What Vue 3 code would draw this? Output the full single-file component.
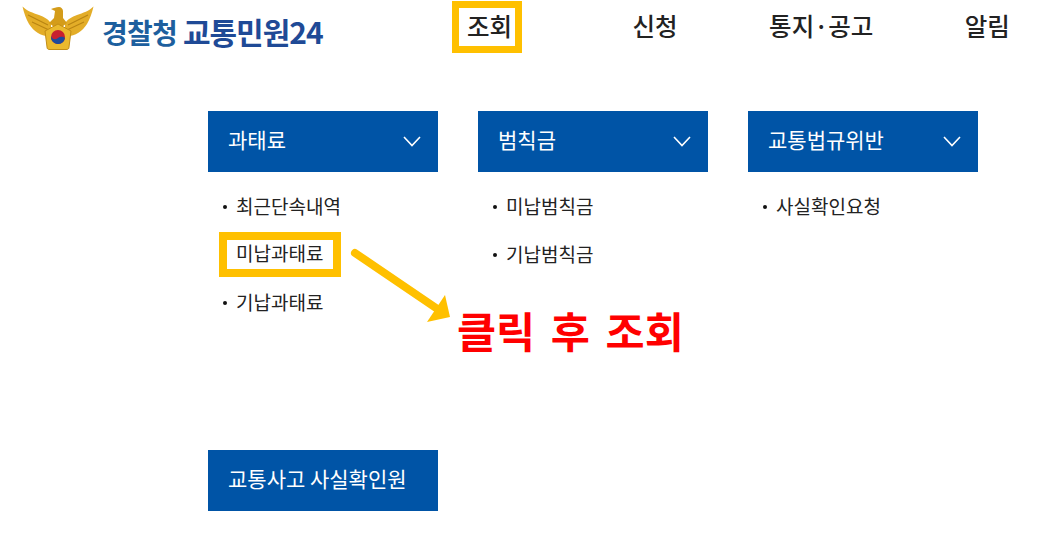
<script setup>
const menus = [
  { title: "과태료", items: ["최근단속내역", "미납과태료", "기납과태료"], active: "미납과태료" },
  { title: "범칙금", items: ["미납범칙금", "기납범칙금"] },
  { title: "교통법규위반", items: ["사실확인요청"] },
];
const navItems = ["신청", "통지·공고", "알림"];
</script>

<template>
  <div class="page">
    <header class="header">
      <div class="logo">
        <svg class="emblem" width="72" height="46" viewBox="0 0 72 46">
          <path d="M0.5 0.5 C5 5 11 7 17 9 C22 11 27 13 29 18 L29 30 C20 31 12 26 7 18 C4 13 2 7 0.5 0.5 Z" fill="#e3ad28" />
          <path d="M71.5 0.5 C67 5 61 7 55 9 C50 11 45 13 43 18 L43 30 C52 31 60 26 65 18 C68 13 70 7 71.5 0.5 Z" fill="#e3ad28" />
          <path d="M6 9 L26 19 M10 16 L27 24 M66 9 L46 19 M62 16 L45 24" stroke="#b98412" stroke-width="1.1" fill="none" />
          <path d="M37 1 C34 1 32 2 29 3 L33 5 L32 12 L27 17 L36 24 L45 17 L41 12 L41 5 C41 3 39 1 37 1 Z" fill="#d49c1a" />
          <path d="M36 18 L49 25 L47 41 C47 43 46 43.5 44 43.5 L28 43.5 C26 43.5 25 43 25 41 L23 25 Z" fill="#eab92e" stroke="#c28d15" stroke-width="1" />
          <circle cx="36" cy="31" r="7" fill="#c8202f" />
          <path d="M29 30 C30.5 34 33.5 34 36 32 C38.5 30 41.5 31 43 32 A7 7 0 0 1 29 30 Z" fill="#1d4a9c" />
        </svg>
        <span class="logo-text"><span class="logo-org">경찰청</span><span class="logo-name">교통민원24</span></span>
      </div>
      <nav class="nav">
        <a class="nav-item nav-active">조회</a>
        <a v-for="item in navItems" :key="item" class="nav-item">{{ item }}</a>
      </nav>
    </header>

    <main class="content">
      <section v-for="menu in menus" :key="menu.title" class="menu">
        <div class="menu-head">
          <span class="head-text">{{ menu.title }}</span>
          <svg width="18" height="11" viewBox="0 0 18 11">
            <path d="M1 1 L9 9.5 L17 1" fill="none" stroke="#fff" stroke-width="1.6" />
          </svg>
        </div>
        <ul class="menu-list">
          <li v-for="item in menu.items" :key="item" :class="{ picked: item === menu.active }">
            <span class="label">{{ item }}</span>
          </li>
        </ul>
      </section>

      <div class="menu-head single"><span class="head-text">교통사고 사실확인원</span></div>

      <svg class="arrow" width="110" height="90" viewBox="0 0 110 90">
        <path d="M5 7 L86 62" stroke="#ffc000" stroke-width="8" stroke-linecap="round" fill="none" />
        <path d="M100 71 L77 76 L95 49 Z" fill="#ffc000" />
      </svg>
      <div class="callout">클릭 후 조회</div>
    </main>
  </div>
</template>

<style>
html,
body {
  margin: 0;
  background: #fff;
}
</style>

<style scoped>
.page {
  width: 1062px;
  height: 559px;
  overflow: hidden;
  position: relative;
  font-family: "Noto Sans CJK KR", "Noto Sans", sans-serif;
  color: #222;
}

.header {
  display: flex;
  height: 54px;
  padding-left: 22px;
  box-sizing: border-box;
}

.logo {
  display: flex;
  align-items: flex-start;
  width: 430px;
  padding-top: 6px;
  box-sizing: border-box;
}

.emblem {
  flex: none;
}

.logo-text {
  display: flex;
  align-items: baseline;
  gap: 6px;
  margin: 7px 0 0 8px;
  line-height: 36px;
  font-weight: 700;
  white-space: nowrap;
}

.logo-org {
  color: #1d5f9e;
  font-size: 28px;
  letter-spacing: -0.8px;
}

.logo-name {
  color: #1f4a96;
  font-size: 30px;
  letter-spacing: -1px;
}

.nav {
  display: flex;
  align-items: flex-start;
  gap: 91.5px;
  padding-top: 1px;
}

.nav-item {
  font-size: 24.5px;
  line-height: 50px;
  height: 52px;
  font-weight: 500;
  white-space: nowrap;
}

.nav-active {
  box-sizing: border-box;
  width: 70px;
  border: 7px solid #ffc000;
  line-height: 36px;
  padding-left: 8px;
  margin-right: 19px;
}

.content {
  display: grid;
  grid-template-columns: repeat(3, 230px);
  grid-template-rows: 339px 61px;
  column-gap: 40px;
  padding: 57px 0 0 208px;
  position: relative;
}

.menu-head {
  display: flex;
  align-items: center;
  justify-content: space-between;
  height: 61px;
  padding: 0 17px 0 20px;
  background: #0054a6;
  color: #fff;
  font-size: 21px;
  font-weight: 400;
}

.head-text {
  margin-top: -5px;
}

.menu-list {
  list-style: none;
  margin: 0;
  padding: 10px 0 0 28px;
}

.menu-list li {
  position: relative;
  height: 48px;
  font-size: 19px;
  line-height: 47px;
  font-weight: 400;
}

.menu-list li::before {
  content: "";
  position: absolute;
  left: -13px;
  top: 23px;
  width: 4px;
  height: 4px;
  border-radius: 50%;
  background: #111;
}

.menu-list .picked::before {
  display: none;
}

.label {
  display: inline-block;
  white-space: nowrap;
}

.picked .label {
  box-sizing: border-box;
  position: absolute;
  left: -17px;
  top: 2px;
  width: 122px;
  height: 45px;
  border: 8px solid #ffc000;
  padding-left: 9px;
  line-height: 26px;
}

.single {
  grid-column: 1;
  grid-row: 2;
  padding-left: 20px;
  white-space: nowrap;
}

.arrow {
  position: absolute;
  left: 350px;
  top: 192px;
}

.callout {
  position: absolute;
  left: 457px;
  top: 246px;
  font-size: 42.5px;
  line-height: 60px;
  font-weight: 700;
  color: #f00;
  word-spacing: 6px;
  white-space: nowrap;
}
</style>
